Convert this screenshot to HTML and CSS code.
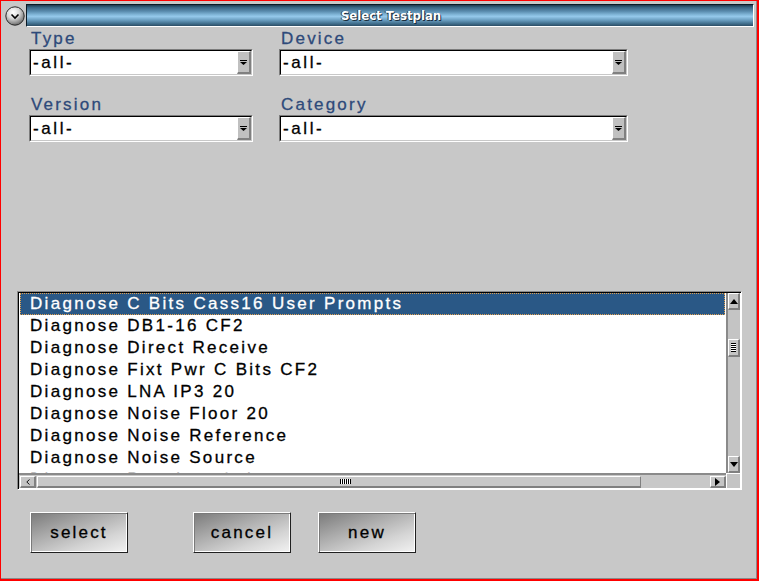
FILE: index.html
```html
<!DOCTYPE html>
<html>
<head>
<meta charset="utf-8">
<title>Select Testplan</title>
<link rel="stylesheet" href="styles.css">
</head>
<body>
<div class="window">
  <div class="titlerow">
    <span class="menu-btn">
      <svg width="20" height="20" viewBox="0 0 20 20">
        <defs>
          <radialGradient id="sph" cx="40%" cy="30%" r="75%">
            <stop offset="0" stop-color="#ffffff"/>
            <stop offset="0.45" stop-color="#d8d8d8"/>
            <stop offset="0.8" stop-color="#8c8c8c"/>
            <stop offset="1" stop-color="#5a5a5a"/>
          </radialGradient>
        </defs>
        <circle cx="10" cy="10" r="9.2" fill="url(#sph)" stroke="#2a2a2a" stroke-width="1"/>
        <path d="M6.5 8.5 L10 12 L13.5 8.5" fill="none" stroke="#000" stroke-width="1.6"/>
      </svg>
    </span>
    <div class="titlebar">Select Testplan</div>
  </div>

  <div class="filters">
    <div class="field-group">
      <div class="label">Type</div>
      <div class="combo"><div class="combo-inner"><span class="combo-value">-all-</span><span class="combo-btn"><svg width="7" height="5" viewBox="0 0 7 5"><rect x="0" y="0" width="7" height="1" fill="#000"/><path d="M0 2 H7 L3.5 5 Z" fill="#000"/></svg></span></div></div>
    </div>
    <div class="field-group">
      <div class="label">Device</div>
      <div class="combo"><div class="combo-inner"><span class="combo-value">-all-</span><span class="combo-btn"><svg width="7" height="5" viewBox="0 0 7 5"><rect x="0" y="0" width="7" height="1" fill="#000"/><path d="M0 2 H7 L3.5 5 Z" fill="#000"/></svg></span></div></div>
    </div>
    <div class="field-group row2">
      <div class="label">Version</div>
      <div class="combo"><div class="combo-inner"><span class="combo-value">-all-</span><span class="combo-btn"><svg width="7" height="5" viewBox="0 0 7 5"><rect x="0" y="0" width="7" height="1" fill="#000"/><path d="M0 2 H7 L3.5 5 Z" fill="#000"/></svg></span></div></div>
    </div>
    <div class="field-group row2">
      <div class="label">Category</div>
      <div class="combo"><div class="combo-inner"><span class="combo-value">-all-</span><span class="combo-btn"><svg width="7" height="5" viewBox="0 0 7 5"><rect x="0" y="0" width="7" height="1" fill="#000"/><path d="M0 2 H7 L3.5 5 Z" fill="#000"/></svg></span></div></div>
    </div>
  </div>

  <div class="listbox">
    <div class="listbox-inner">
      <div class="items">
        <div class="item selected">Diagnose C Bits Cass16 User Prompts</div>
        <div class="item">Diagnose DB1-16 CF2</div>
        <div class="item">Diagnose Direct Receive</div>
        <div class="item">Diagnose Fixt Pwr C Bits CF2</div>
        <div class="item">Diagnose LNA IP3 20</div>
        <div class="item">Diagnose Noise Floor 20</div>
        <div class="item">Diagnose Noise Reference</div>
        <div class="item">Diagnose Noise Source</div>
        <div class="item">Diagnose Receiver Gain</div>
      </div>
      <div class="vscroll">
        <span class="sbtn vbtn"><svg width="8" height="5" viewBox="0 0 8 5"><path d="M0 5 H8 L4 0 Z" fill="#000"/></svg></span>
        <span class="vtrack-a"></span>
        <span class="vthumb"><span class="grip-h"></span></span>
        <span class="vtrack-b"></span>
        <span class="sbtn vbtn"><svg width="8" height="5" viewBox="0 0 8 5"><path d="M0 0 H8 L4 5 Z" fill="#000"/></svg></span>
      </div>
      <div class="hscroll">
        <span class="sbtn hbtn-left"><svg width="4" height="6" viewBox="0 0 4 6"><path d="M3.5 0.5 L0.8 3 L3.5 5.5" fill="none" stroke="#000" stroke-width="0.9"/></svg></span>
        <span class="hthumb"><span class="grip-v"></span></span>
        <span class="htrack"></span>
        <span class="sbtn hbtn-right"><svg width="5" height="8" viewBox="0 0 5 8"><path d="M0 0 V8 L5 4 Z" fill="#000"/></svg></span>
      </div>
      <div class="corner"></div>
    </div>
  </div>

  <div class="buttons">
    <button class="btn btn-select">select</button>
    <button class="btn btn-cancel">cancel</button>
    <button class="btn btn-new">new</button>
  </div>
</div>
</body>
</html>
```

FILE: styles.css
```css
html, body {
  margin: 0;
  padding: 0;
  background: #c8c8c8;
}

.window {
  width: 759px;
  height: 581px;
  box-sizing: border-box;
  border-left: 1px solid #ff0000;
  border-top: 1px solid #ff0000;
  border-right: 2px solid #ff0000;
  border-bottom: 2px solid #ff0000;
  background: #c8c8c8;
  box-shadow: inset -1px -1px 0 #8a8a8a;
  padding-top: 3px;
  font-family: "Liberation Sans", Arial, sans-serif;
  overflow: hidden;
}

/* ---------- title ---------- */
.titlerow {
  display: flex;
  align-items: flex-start;
  height: 23px;
}

.menu-btn {
  display: block;
  width: 20px;
  height: 20px;
  margin-left: 4px;
  margin-top: 2px;
}

.menu-btn svg {
  display: block;
}

.titlebar {
  margin-left: 1px;
  width: 728px;
  height: 23px;
  box-sizing: border-box;
  border-top: 1px solid #0a1a26;
  border-left: 1px solid #0a1a26;
  border-right: 1px solid #ffffff;
  border-bottom: 1px solid #ffffff;
  background: linear-gradient(to bottom,
    #1f3a4e 0%,
    #3a6684 12%,
    #5a8cae 30%,
    #86bcde 48%,
    #94c8ea 55%,
    #6a9ec0 72%,
    #42708e 88%,
    #2c4e66 100%);
  color: #ffffff;
  font-family: "DejaVu Sans Condensed", "DejaVu Sans", sans-serif;
  font-weight: bold;
  font-size: 13px;
  line-height: 21px;
  text-align: center;
  text-shadow: 1px 1px 0 #1a2e3e, -1px 0 0 #2a4458;
  padding-left: 2px;
}

/* ---------- filters ---------- */
.filters {
  display: grid;
  grid-template-columns: 224px 349px;
  column-gap: 26px;
  margin-left: 28px;
  margin-top: 2px;
}

.field-group.row2 {
  margin-top: 19px;
}

.label {
  height: 20px;
  line-height: 20px;
  font-size: 17px;
  letter-spacing: 2.2px;
  color: #2e4a7a;
  padding-left: 2px;
  -webkit-text-stroke: 0.3px #2e4a7a;
}

.combo {
  height: 27px;
  box-sizing: border-box;
  border-top: 1px solid #7c7c7c;
  border-left: 1px solid #7c7c7c;
  border-right: 1px solid #ffffff;
  border-bottom: 1px solid #ffffff;
}

.combo-inner {
  height: 100%;
  box-sizing: border-box;
  border-top: 1px solid #000000;
  border-left: 1px solid #000000;
  border-right: 1px solid #c8c8c8;
  border-bottom: 1px solid #c8c8c8;
  background: #ffffff;
  display: flex;
}

.combo-value {
  flex: 1;
  padding-left: 2px;
  font-size: 17px;
  line-height: 23px;
  letter-spacing: 2.6px;
  color: #000000;
  -webkit-text-stroke: 0.3px #000;
}

.combo-btn {
  width: 14px;
  box-sizing: border-box;
  background: #c0c0c0;
  border-top: 1px solid #ffffff;
  border-left: 1px solid #ffffff;
  border-right: 2px solid #808080;
  border-bottom: 2px solid #808080;
  display: flex;
  align-items: center;
  justify-content: center;
}

.combo-btn svg {
  display: block;
  margin-top: 1px;
}

/* ---------- list ---------- */
.listbox {
  margin-left: 16px;
  margin-top: 149px;
  width: 725px;
  height: 199px;
  box-sizing: border-box;
  border-top: 1px solid #8a8a8a;
  border-left: 1px solid #8a8a8a;
  border-right: 1px solid #ffffff;
  border-bottom: 1px solid #ffffff;
}

.listbox-inner {
  height: 100%;
  box-sizing: border-box;
  border-top: 1px solid #000000;
  border-left: 1px solid #000000;
  display: grid;
  grid-template-columns: 707px 15px;
  grid-template-rows: 180px 16px;
}

.items {
  background: #ffffff;
  overflow: hidden;
}

.item {
  height: 22px;
  line-height: 21px;
  padding-left: 11px;
  font-size: 17px;
  letter-spacing: 2.3px;
  color: #000000;
  white-space: nowrap;
  box-sizing: border-box;
  -webkit-text-stroke: 0.3px #000;
}

.item.selected {
  background: #2a5886;
  color: #ffffff;
  -webkit-text-stroke: 0.3px #fff;
  margin-left: 1px;
  margin-right: 1px;
  padding-left: 10px;
  outline: 1px dotted #e0a050;
  outline-offset: -1px;
}

.sbtn {
  display: flex;
  align-items: center;
  justify-content: center;
  box-sizing: border-box;
  background: #c4c4c4;
  border-top: 1px solid #ffffff;
  border-left: 1px solid #ffffff;
  border-right: 2px solid #808080;
  border-bottom: 2px solid #808080;
}

.sbtn svg {
  display: block;
}

.vscroll {
  display: flex;
  flex-direction: column;
  background: #c4c4c4;
  box-sizing: border-box;
  border-left: 2px solid #8a8a8a;
  border-right: 1px solid #ffffff;
}

.vbtn {
  height: 17px;
  width: 12px;
}

.vtrack-a {
  height: 29px;
}

.vtrack-b {
  flex: 1;
}

.vthumb {
  height: 18px;
  width: 12px;
  display: flex;
  align-items: center;
  justify-content: center;
  box-sizing: border-box;
  background: #c4c4c4;
  border-top: 1px solid #ffffff;
  border-left: 1px solid #ffffff;
  border-right: 2px solid #808080;
  border-bottom: 2px solid #808080;
}

.grip-h {
  width: 5px;
  height: 9px;
  background: repeating-linear-gradient(to bottom, #000 0 1px, #fff 1px 2px);
}

.hscroll {
  display: flex;
  align-items: stretch;
  background: #c8c8c8;
  box-sizing: border-box;
  border-top: 2px solid #8a8a8a;
  border-bottom: 1px solid #ffffff;
  padding-top: 1px;
}

.hbtn-left {
  width: 16px;
  margin-left: 1px;
}

.hthumb {
  width: 604px;
  margin-left: 1px;
  display: flex;
  align-items: center;
  justify-content: center;
  box-sizing: border-box;
  background: #c8c8c8;
  border-top: 1px solid #ffffff;
  border-left: 1px solid #ffffff;
  border-right: 1px solid #808080;
  border-bottom: 2px solid #808080;
  padding-left: 12px;
}

.grip-v {
  width: 11px;
  height: 5px;
  background: repeating-linear-gradient(to right, #000 0 1px, #fff 1px 2px);
}

.htrack {
  flex: 1;
}

.hbtn-right {
  width: 16px;
}

.corner {
  background: #c4c4c4;
  box-sizing: border-box;
  border: 1px solid #ffffff;
}

/* ---------- buttons ---------- */
.buttons {
  display: flex;
  margin-top: 22px;
  padding-left: 29px;
}

.btn {
  width: 98px;
  height: 41px;
  box-sizing: border-box;
  border-top: 1px solid #ffffff;
  border-left: 1px solid #ffffff;
  border-right: 1px solid #202020;
  border-bottom: 1px solid #202020;
  box-shadow: inset 1px 1px 0 #7a7a7a, inset -1px -1px 0 #ffffff;
  background: linear-gradient(160deg, #7a7a7a 0%, #a8a8a8 35%, #d4d4d4 70%, #f2f2f2 100%);
  font-family: "Liberation Sans", Arial, sans-serif;
  font-size: 17px;
  letter-spacing: 2.2px;
  color: #000000;
  -webkit-text-stroke: 0.3px #000;
  padding: 0;
  margin: 0;
}

.btn-cancel {
  margin-left: 65px;
}

.btn-new {
  margin-left: 27px;
}
```
